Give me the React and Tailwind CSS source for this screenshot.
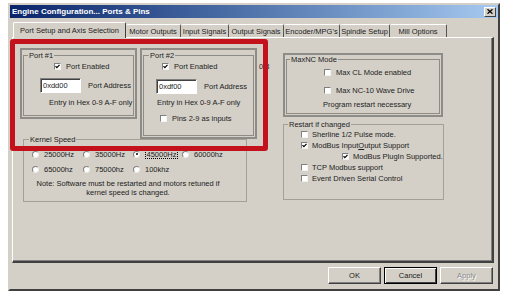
const TABS = [
  { label: 'Port Setup and Axis Selection', w: 'w-[113px]', active: true },
  { label: 'Motor Outputs', w: 'w-[55px]' },
  { label: 'Input Signals', w: 'w-[48px]' },
  { label: 'Output Signals', w: 'w-[55px]' },
  { label: "Encoder/MPG's", w: 'w-[56px]' },
  { label: 'Spindle Setup', w: 'w-[50px]' },
  { label: 'Mill Options', w: 'w-[57px]' },
];

const SPEEDS = [
  { label: '25000Hz' },
  { label: '35000Hz' },
  { label: '45000Hz', on: true },
  { label: '60000hz' },
  { label: '65000hz' },
  { label: '75000hz' },
  { label: '100khz' },
];

function Check({ on }) {
  return (
    <span className="flex h-[7px] w-[7px] shrink-0 items-center justify-center border border-t-[#808080] border-l-[#808080] border-r-[#f4f3f0] border-b-[#f4f3f0] bg-white">
      {on && (
        <svg viewBox="0 0 5 5" className="h-[5px] w-[5px]">
          <path d="M0.5 2.2 L1.9 3.7 L4.5 0.9" fill="none" stroke="#000" strokeWidth="1.2" />
        </svg>
      )}
    </span>
  );
}

function Radio({ on }) {
  return (
    <span className="flex h-[7px] w-[7px] shrink-0 items-center justify-center rounded-full border border-t-[#808080] border-l-[#808080] border-r-[#ebe9e4] border-b-[#ebe9e4] bg-white">
      {on && <span className="h-[2px] w-[2px] rounded-full bg-black" />}
    </span>
  );
}

function HexInput({ value }) {
  return (
    <span className="flex h-[15px] w-[41px] items-center border border-t-[#808080] border-l-[#808080] border-r-white border-b-white bg-white pl-[2px] shadow-[inset_1px_1px_0_#404040]">
      {value}
    </span>
  );
}

function Button({ label, main, disabled }) {
  return (
    <span
      className={`flex h-[17px] w-[53px] items-center justify-center border ${
        main
          ? 'border-black shadow-[inset_1px_1px_0_#fff,inset_-1px_-1px_0_#404040]'
          : 'border-t-white border-l-white border-r-[#404040] border-b-[#404040] shadow-[inset_-1px_-1px_0_#808080]'
      } ${disabled ? 'text-[#8a8a8a] [text-shadow:1px_1px_0_#fff]' : ''}`}
    >
      {label}
    </span>
  );
}

function App() {
  return (
    <div className="relative h-[293px] w-[508px] overflow-hidden bg-white pl-[8px] pt-[3px] font-['Liberation_Sans',Arial,sans-serif] text-[7.5px] leading-[9px] text-[#1c1c1c]">
      <div className="flex h-[288px] w-[492px] flex-col border-2 border-t-[#d4d0c8] border-l-[#d4d0c8] border-r-[#404040] border-b-[#404040] bg-[#d4d0c8]">
        {/* title bar */}
        <div className="flex h-[13px] shrink-0 items-center justify-between bg-linear-to-r from-[#0a246a] to-[#a6caf0] pl-[2px] pr-[2px]">
          <span className="text-[8px] font-bold text-white">Engine Configuration... Ports &amp; Pins</span>
          <span className="flex h-[10px] w-[12px] items-center justify-center border border-t-white border-l-white border-r-[#404040] border-b-[#404040] bg-[#d4d0c8]">
            <svg viewBox="0 0 6 5" className="h-[5px] w-[6px]">
              <path d="M0.5 0.3 L5.5 4.7 M5.5 0.3 L0.5 4.7" stroke="#000" strokeWidth="1.3" />
            </svg>
          </span>
        </div>

        {/* tabs */}
        <div className="flex h-[19px] shrink-0 items-end pl-[3px]">
          {TABS.map((t) =>
            t.active ? (
              <span
                key={t.label}
                className={`relative z-10 -mb-px flex h-[16px] ${t.w} items-center justify-center rounded-t-[2px] border-t border-l border-r border-t-white border-l-white border-r-[#404040] bg-[#d4d0c8]`}
              >
                {t.label}
              </span>
            ) : (
              <span
                key={t.label}
                className={`flex h-[13px] ${t.w} items-center justify-center rounded-t-[2px] border-t border-r border-t-white border-r-[#555]`}
              >
                {t.label}
              </span>
            )
          )}
        </div>

        {/* tab panel */}
        <div className="ml-[2px] flex h-[226px] w-[482px] shrink-0 border-t border-l border-r-2 border-b-2 border-t-white border-l-white border-r-[#404040] border-b-[#404040] pl-[7px] pt-[10px] shadow-[inset_-1px_-1px_0_#808080]">
          {/* left column */}
          <div className="flex flex-col">
            <div className="flex items-start gap-[3px]">
              <div className="h-[71px] w-[117px] border-2 border-[#8e8c86] p-[1px]">
                <fieldset className="h-full border border-[#8e8c86]">
                  <legend className="ml-[4px] px-[1px]">Port #1</legend>
                  <div className="mt-[1.5px] flex items-center pl-[30px]">
                    <Check on />
                    <span className="ml-[5px]">Port Enabled</span>
                  </div>
                  <div className="mt-[7.5px] flex items-center pl-[16px]">
                    <HexInput value="0xdd00" />
                    <span className="ml-[7px]">Port Address</span>
                  </div>
                  <div className="mt-[5px] pl-[25px]">Entry in Hex 0-9 A-F only</div>
                </fieldset>
              </div>

              <div className="h-[91px] w-[117px] border-2 border-[#8e8c86] p-[1px]">
                <fieldset className="h-full border border-[#8e8c86]">
                  <legend className="ml-[5px] px-[1px]">Port #2</legend>
                  <div className="mt-[2px] flex items-center pl-[18px]">
                    <Check on />
                    <span className="ml-[5px]">Port Enabled</span>
                  </div>
                  <div className="mt-[8px] flex items-center pl-[12px]">
                    <HexInput value="0xdf00" />
                    <span className="ml-[7px]">Port Address</span>
                  </div>
                  <div className="mt-[3.5px] pl-[13px]">Entry in Hex 0-9 A-F only</div>
                  <div className="mt-[7px] flex items-center pl-[16px]">
                    <Check />
                    <span className="ml-[5px]">Pins 2-9 as inputs</span>
                  </div>
                </fieldset>
              </div>
            </div>

            <fieldset className="ml-[3px] -mt-[4px] h-[67px] w-[224px] border border-[#a3a099]">
              <legend className="ml-[5px] px-[1px]">Kernel Speed</legend>
              <div className="mt-[5.5px] grid grid-cols-[51px_50px_49px_auto] gap-y-[6.5px] pl-[8px]">
                {SPEEDS.map((s) => (
                  <div key={s.label} className="flex items-center">
                    <Radio on={s.on} />
                    {s.on ? (
                      <span className="ml-[5px] border border-dotted border-black px-[0.5px] leading-[7px]">{s.label}</span>
                    ) : (
                      <span className="ml-[5px]">{s.label}</span>
                    )}
                  </div>
                ))}
              </div>
              <div className="ml-[4px] mt-[4.5px] w-[200px] text-center leading-[9.5px]">
                Note: Software must be restarted and motors retuned if
                <br />
                kernel speed is changed.
              </div>
            </fieldset>
          </div>

          {/* stray label */}
          <div className="w-[26px] shrink-0 pl-[2px] pt-[14px]">0:8</div>

          {/* right column */}
          <div className="flex flex-col">
            <div className="mt-[5px] h-[64px] w-[160px] border-2 border-[#8e8c86] px-[1px] pb-[1px]">
              <fieldset className="h-full border border-[#8e8c86]">
                <legend className="ml-[3px] px-[1px]">MaxNC Mode</legend>
                <div className="mt-[4px] flex items-center pl-[37px]">
                  <Check />
                  <span className="ml-[5px]">Max CL Mode enabled</span>
                </div>
                <div className="mt-[8.5px] flex items-center pl-[37px]">
                  <Check />
                  <span className="ml-[5px]">Max NC-10 Wave Drive</span>
                </div>
                <div className="mt-[5px] pl-[36px]">Program restart necessary</div>
              </fieldset>
            </div>

            <fieldset className="mt-[3px] h-[80px] w-[161px] border border-[#a3a099]">
              <legend className="ml-[4px] px-[1px]">Restart if changed</legend>
              <div className="flex h-[11px] items-center pl-[17px]">
                <Check />
                <span className="ml-[4px]">Sherline 1/2 Pulse mode.</span>
              </div>
              <div className="flex h-[11px] items-center pl-[17px]">
                <Check on />
                <span className="ml-[4px]">
                  ModBus Input<span className="underline">O</span>utput Support
                </span>
              </div>
              <div className="flex h-[11px] items-center pl-[58px]">
                <Check on />
                <span className="ml-[4px]">ModBus PlugIn Supported.</span>
              </div>
              <div className="flex h-[11px] items-center pl-[17px]">
                <Check />
                <span className="ml-[4px]">TCP Modbus support</span>
              </div>
              <div className="flex h-[11px] items-center pl-[17px]">
                <Check />
                <span className="ml-[4px]">Event Driven Serial Control</span>
              </div>
            </fieldset>
          </div>
        </div>

        {/* buttons */}
        <div className="flex h-[26px] shrink-0 justify-end gap-[3px] pr-[5px] pt-[4px]">
          <Button label="OK" />
          <Button label="Cancel" main />
          <Button label="Apply" disabled />
        </div>
      </div>

      {/* red highlight annotation */}
      <div className="absolute left-[10px] top-[39px] h-[112px] w-[258px] rounded-[3px] border-[5px] border-[#c3121b]" />
    </div>
  );
}

export default App;
